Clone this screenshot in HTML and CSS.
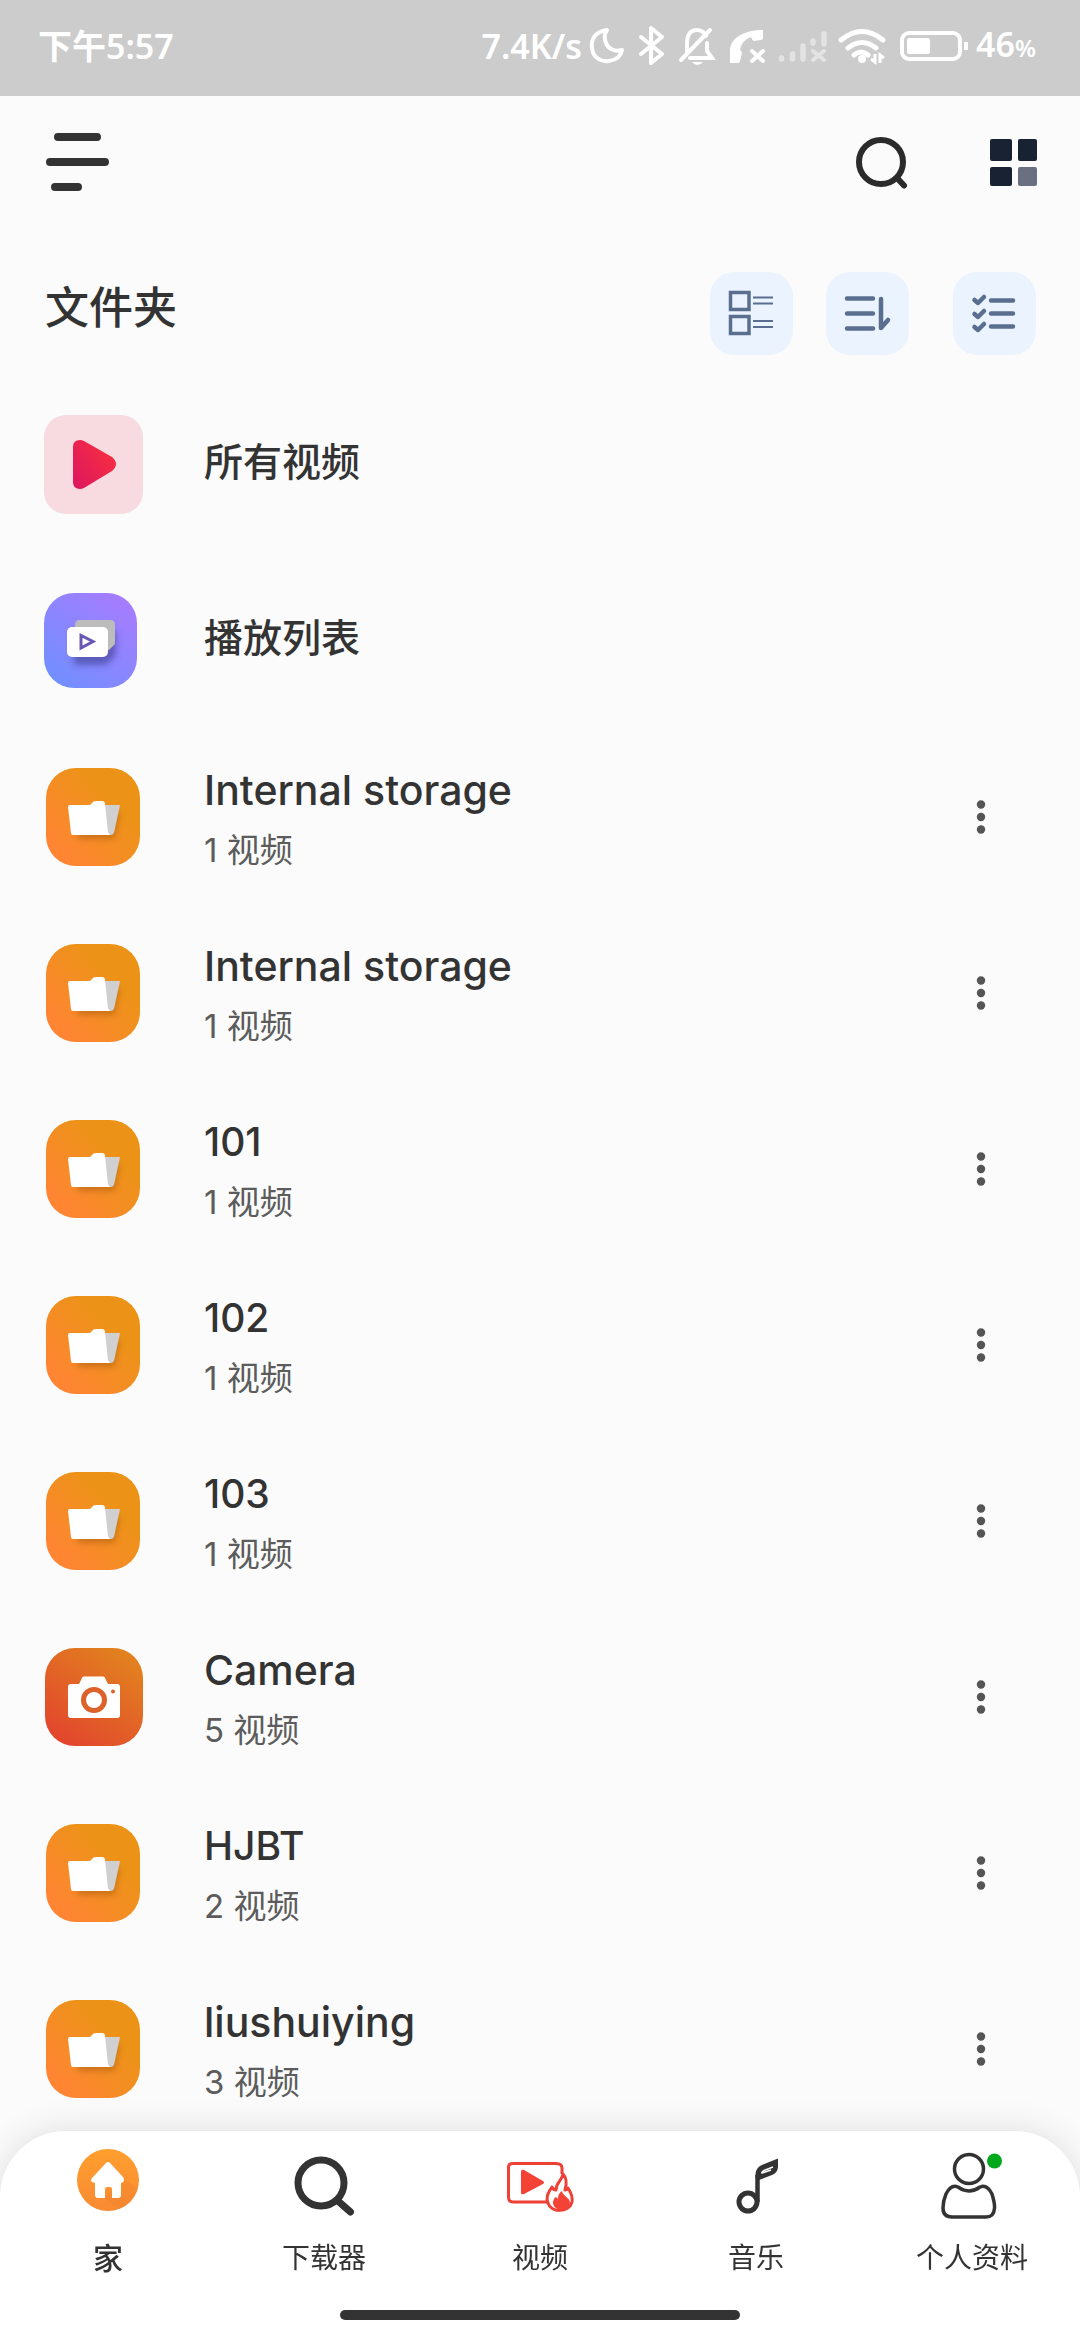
FILE: index.html
```html
<!DOCTYPE html>
<html lang="zh-CN">
<head>
<meta charset="utf-8">
<meta name="viewport" content="width=device-width">
<title>文件夹</title>
<link rel="stylesheet" href="styles.css">
</head>
<body>
<svg class="defs" width="0" height="0" aria-hidden="true">
  <defs>
    <linearGradient id="g-folder" x1="0" y1="1" x2="1" y2="0"><stop offset="0.15" stop-color="#ff8533"/><stop offset="0.7" stop-color="#ec9317"/></linearGradient>
    <linearGradient id="g-camera" x1="0.2" y1="1" x2="0.9" y2="0"><stop offset="0" stop-color="#e2452d"/><stop offset="1" stop-color="#e2861e"/></linearGradient>
    <linearGradient id="g-list" x1="0.1" y1="1" x2="0.9" y2="0"><stop offset="0" stop-color="#6f90ff"/><stop offset="1" stop-color="#a97bff"/></linearGradient>
    <linearGradient id="g-play" x1="0" y1="1" x2="1" y2="0.2"><stop offset="0" stop-color="#dc1560"/><stop offset="1" stop-color="#f8303f"/></linearGradient>
    <linearGradient id="g-home" x1="0" y1="0" x2="0" y2="1"><stop offset="0" stop-color="#ff9f2e"/><stop offset="1" stop-color="#f98a33"/></linearGradient>
    <filter id="soft" x="-30%" y="-30%" width="160%" height="180%"><feGaussianBlur stdDeviation="3"/></filter>
    <symbol id="folder" viewBox="0 0 100 100">
      <rect x="2" y="1" width="94" height="98" rx="30" fill="url(#g-folder)"/>
      <path d="M32 45H76L70 72H34Z" fill="#7a3f00" opacity=".35" filter="url(#soft)"/>
      <path d="M60 38H76L70 66Q69 68 66 68H60Z" fill="#d0d0d0"/>
      <path d="M26 38H45Q47 38 48 36Q49 34 52 34H58Q61 34 61 37L64 65Q65 68 67 68H29Q27 68 27 66L24 40Q24 38 26 38Z" fill="#fff"/>
    </symbol>
    <symbol id="dots" viewBox="0 0 16 40"><circle cx="8" cy="7.500" r="4.200"/><circle cx="8" cy="20" r="4.200"/><circle cx="8" cy="32.500" r="4.200"/></symbol>
  </defs>
</svg>

<div class="status">
  <span class="status-time">下午5:57</span>
  <div class="status-right">
    <span>7.4K/s</span>
    <svg class="status-icons" viewBox="588 24 382 42" width="382" height="42" fill="none" stroke="#fff" aria-hidden="true">
      <path d="M607 29C594 31 591 39 592 47C593 57 601 61 609 60C616 59 621 55 622 49C615 51 608 48 606 42C604 37 604 33 607 29Z" stroke-width="4" stroke-linejoin="round"/>
      <path d="M641 36L662 53L651 62V27L662 36L641 53" stroke-width="4" stroke-linejoin="round" stroke-linecap="round"/>
      <path d="M687 52V43C687 33 691 29 697 29C701 29 704 31 706 35M690 57H712L707 50V42M681 59L710 29" stroke-width="4" stroke-linecap="round"/>
      <path d="M692 61H703Q697 67 692 61Z" fill="#fff" stroke="none"/>
      <path d="M730 62V49C731 36 745 29 763 29V37Q763 39 761 39L754 40Q752 39 751 36C745 38 741 43 740 49Q742 50 742 52L740 60Q740 62 738 62Z" fill="#fff" stroke="none"/>
      <path d="M752 50L763 60M763 50L752 60" stroke-width="4" stroke-linecap="round"/>
      <g opacity=".45" stroke-width="5.500" stroke-linecap="round"><path d="M781.500 57V58M792.500 53V58M803 45V58M813 40V42M824 33V43"/><path d="M813 50L824 59M824 50L813 59" stroke-width="4"/></g>
      <path d="M841 39Q862 22 883 39M848 47Q862 36 876 47M854 54Q861 48 868 54" stroke-width="5" stroke-linecap="round"/>
      <circle cx="862" cy="58" r="4" fill="#fff" stroke="none"/>
      <path d="M875 53V61L871 58M880 62V54L884 57" stroke-width="3"/>
      <rect x="902" y="32" width="58" height="26" rx="7" stroke-width="4"/>
      <rect x="907" y="37" width="23" height="16" rx="2" fill="#fff" stroke="none"/>
      <path d="M966 41V49" stroke-width="4"/>
    </svg>
    <span>46<small>%</small></span>
  </div>
</div>

<header class="topbar">
  <button class="plain" aria-label="菜单">
    <svg width="64" height="60" viewBox="0 0 64 60" stroke="#333" stroke-width="8" stroke-linecap="round"><path d="M12 4H51M4 29H59M9 54H32"/></svg>
  </button>
  <div class="topbar-actions">
    <button class="plain" aria-label="搜索">
      <svg width="54" height="54" viewBox="0 0 54 54" fill="none" stroke="#2b2b2b" stroke-width="6" stroke-linecap="round"><circle cx="26" cy="26" r="22"/><path d="M43 43L49 49.500"/></svg>
    </button>
    <button class="plain" aria-label="网格">
      <svg width="48" height="48" viewBox="0 0 48 48" fill="#182232"><rect x="0" y="0" width="22" height="22" rx="2"/><rect x="28" y="0" width="19" height="22" rx="2"/><rect x="0" y="28" width="22" height="19" rx="2"/><rect x="28" y="28" width="19" height="19" rx="2" fill="#6b7080"/></svg>
    </button>
  </div>
</header>

<div class="section-head">
  <h1>文件夹</h1>
  <div class="tools">
    <button class="tool" aria-label="视图"><svg width="83" height="83" viewBox="0 0 83 83" fill="none" stroke="#5a6f90"><path d="M20.500 20.500H39V37.500H20.500ZM20.500 44.500H39V61.500H20.500Z" stroke-width="3.500"/><path d="M43 25.500H63M43 31.500H63M43 49H63M43 55H63" stroke-width="2"/></svg></button>
    <button class="tool" aria-label="排序"><svg width="83" height="83" viewBox="0 0 83 83" fill="none" stroke="#5a6f90" stroke-width="4.500" stroke-linecap="round" stroke-linejoin="round"><path d="M21 26.500H47M21 41.500H47M21 56.500H47M55 27V56L62 48"/></svg></button>
    <button class="tool tool-last" aria-label="选择"><svg width="83" height="83" viewBox="0 0 83 83" fill="none" stroke="#5a6f90" stroke-width="4.500" stroke-linecap="round" stroke-linejoin="round"><path d="M38 28.500H60M38 41.500H60M38 54.500H60M21.500 28L25 31L31 25M21.500 42L25 45L31 39M21.500 55L25 58L31 52"/></svg></button>
  </div>
</div>

<main>
  <ul class="list">
    <li class="row"><a href="#all"><svg class="thumb" viewBox="0 0 100 100"><rect width="99" height="99" rx="22" fill="#f8dae1"/><path d="M29 32Q29 25 36 25Q38 25 40 26L68 42Q76 49 68 56L40 73Q38 74 36 74Q29 74 29 67Z" fill="url(#g-play)"/></svg><span class="names names-single"><b>所有视频</b></span></a></li>
    <li class="row"><a href="#playlists"><svg class="thumb" viewBox="0 0 100 100"><rect y="2" width="93" height="95" rx="30" fill="url(#g-list)"/><path d="M28 40H72V64L62 74H30Z" fill="#30307a" opacity=".5" filter="url(#soft)"/><path d="M36 29H66Q71 29 71 34V53L65 59H31V34Q31 29 36 29Z" fill="#bcbcbc"/><rect x="23" y="36" width="41" height="30" rx="5" fill="#fff"/><path d="M37 44.500V57L49 50.500Z" fill="none" stroke="#6a58b5" stroke-width="3"/></svg><span class="names names-single"><b>播放列表</b></span></a></li>
    <li class="row"><a href="#f1"><svg class="thumb"><use href="#folder"/></svg><span class="names"><b class="folder-name">Internal storage</b><span>1 视频</span></span></a><button class="more" aria-label="更多"><svg width="16" height="40"><use href="#dots"/></svg></button></li>
    <li class="row"><a href="#f2"><svg class="thumb"><use href="#folder"/></svg><span class="names"><b class="folder-name">Internal storage</b><span>1 视频</span></span></a><button class="more" aria-label="更多"><svg width="16" height="40"><use href="#dots"/></svg></button></li>
    <li class="row"><a href="#f3"><svg class="thumb"><use href="#folder"/></svg><span class="names"><b>101</b><span>1 视频</span></span></a><button class="more" aria-label="更多"><svg width="16" height="40"><use href="#dots"/></svg></button></li>
    <li class="row"><a href="#f4"><svg class="thumb"><use href="#folder"/></svg><span class="names"><b>102</b><span>1 视频</span></span></a><button class="more" aria-label="更多"><svg width="16" height="40"><use href="#dots"/></svg></button></li>
    <li class="row"><a href="#f5"><svg class="thumb"><use href="#folder"/></svg><span class="names"><b>103</b><span>1 视频</span></span></a><button class="more" aria-label="更多"><svg width="16" height="40"><use href="#dots"/></svg></button></li>
    <li class="row"><a href="#f6"><svg class="thumb" viewBox="0 0 100 100"><rect x="1" y="1" width="98" height="98" rx="30" fill="url(#g-camera)"/><path d="M27 37H35L38 31Q38 29.500 40 29.500H59Q61 29.500 61 31L64 37H73Q76 37 76 40V68Q76 71 73 71H27Q24 71 24 68V40Q24 37 27 37Z" fill="#fff"/><circle cx="50" cy="53" r="10.500" fill="none" stroke="#dd6229" stroke-width="5"/><circle cx="69" cy="44.500" r="2" fill="#dd6229"/></svg><span class="names"><b class="folder-name">Camera</b><span>5 视频</span></span></a><button class="more" aria-label="更多"><svg width="16" height="40"><use href="#dots"/></svg></button></li>
    <li class="row"><a href="#f7"><svg class="thumb"><use href="#folder"/></svg><span class="names"><b>HJBT</b><span>2 视频</span></span></a><button class="more" aria-label="更多"><svg width="16" height="40"><use href="#dots"/></svg></button></li>
    <li class="row"><a href="#f8"><svg class="thumb"><use href="#folder"/></svg><span class="names"><b class="folder-name">liushuiying</b><span>3 视频</span></span></a><button class="more" aria-label="更多"><svg width="16" height="40"><use href="#dots"/></svg></button></li>
  </ul>
</main>

<footer class="dock">
  <nav class="tabs">
    <a class="tab tab-active" href="#home"><svg width="72" height="72" viewBox="0 0 72 72"><circle cx="36" cy="32" r="31" fill="url(#g-home)"/><path d="M52 31L66 41Q61 57 46 61L32 50Z" fill="#ee822c" opacity=".35"/><path d="M36 14Q37 14 38 15L51 29Q54 34 49 35V47Q49 50 46 50H40V41Q40 39 38 39H35Q33 39 33 41V50H26Q23 50 23 47V35Q17 34 20 30L34 15Q35 14 36 14Z" fill="#fff"/></svg><span>家</span></a>
    <a class="tab" href="#downloader"><svg width="72" height="72" viewBox="0 0 72 72" fill="none" stroke="#333" stroke-width="7" stroke-linecap="round"><circle cx="33" cy="35" r="23"/><path d="M50 53L62.500 64"/></svg><span>下载器</span></a>
    <a class="tab" href="#video"><svg width="72" height="72" viewBox="0 0 72 72" fill="none" stroke="#ee4136" stroke-width="3"><path d="M43 54H9Q4.500 54 4.500 49V19Q4.500 15.500 9 15.500H52Q58 15.500 58 20V26"/><path d="M17 24Q17 21 20 22L39 33Q41 34.500 39 36L20 46Q17 47 17 45Z" fill="#f44336" stroke="none"/><path d="M59 26C58 33 52 34 52 42C49 42 48 39 48 39C43 46 42 50 44 55C47 65 65 65 68 54C69 47 66 43 64 40C63 42 62 42 61 42C63 35 62 29 59 26Z" fill="#fff" stroke-linejoin="round"/><path d="M58 43C59 49 66 49 66 55C64 64 50 64 49 55C49 52 51 49 52 49L54 51C54 47 55 45 58 43Z" fill="#f44336" stroke="none"/></svg><span>视频</span></a>
    <a class="tab" href="#music"><svg width="72" height="72" viewBox="0 0 72 72" fill="none" stroke="#333"><circle cx="28" cy="54" r="9" stroke-width="5"/><path d="M37.500 54V27" stroke-width="4.500"/><path d="M35.500 30V26Q36 19 43 16.500L58 10.500V19Q57.500 25 52 27L39 32Z" fill="#333" stroke="none"/><path d="M41.500 25.500Q42 23.500 44 22.500L53 19" stroke="#fff" stroke-width="1.500"/><path d="M42 25L51 22" stroke="#fff" stroke-width="1.500"/></svg><span>音乐</span></a>
    <a class="tab" href="#profile"><svg width="72" height="72" viewBox="0 0 72 72" fill="none" stroke="#333" stroke-width="3.500"><ellipse cx="33" cy="21" rx="14.500" ry="14.500"/><path d="M22 39Q33 47 44 39Q51 36 56 46Q59 56 58.500 60Q58 69 50 69H16Q7 69 7 60Q7 53 10 46Q15 36 22 39Z" stroke-linejoin="round"/><circle cx="58.500" cy="13" r="7.500" fill="#00a81c" stroke="none"/></svg><span>个人资料</span></a>
  </nav>
  <div class="home-bar"></div>
</footer>
</body>
</html>
```
FILE: styles.css
```css
* { box-sizing: border-box; }

body {
  margin: 0;
  height: 100vh;
  display: flex;
  flex-direction: column;
  overflow: hidden;
  background: #fbfbfb;
  color: #333;
  font-family: Inter, "Noto Sans CJK SC", sans-serif;
}

svg { display: block; flex: none; }
.defs { position: absolute; }
a { color: inherit; text-decoration: none; }
button { border: 0; padding: 0; background: none; cursor: pointer; }

.status {
  flex: none;
  display: flex;
  justify-content: space-between;
  align-items: center;
  height: 96px;
  padding: 0 44px 4px 38px;
  background: #ccc;
  color: #fff;
  font: 600 34px/40px "Noto Sans", "Noto Sans CJK SC", sans-serif;
}
.status-right { display: flex; align-items: center; gap: 6px; }
.status small { font-size: 24px; }

.topbar {
  flex: none;
  display: flex;
  justify-content: space-between;
  align-items: center;
  height: 134px;
  padding: 0 42px 0 46px;
}
.topbar-actions { display: flex; align-items: center; gap: 81px; }

.section-head {
  flex: none;
  display: flex;
  justify-content: space-between;
  align-items: center;
  height: 147px;
  padding: 20px 44px 0 45px;
}
.section-head h1 { margin: 0 0 12px; font-size: 44px; line-height: 60px; font-weight: 500; }
.tools { display: flex; gap: 33px; }
.tool { border-radius: 24px; background: #ebf3fe; }
.tool-last { margin-left: 11px; }

main { flex: 1; min-height: 0; overflow: hidden; }
.list { margin: 0; padding: 0; list-style: none; }
.row {
  display: flex;
  align-items: center;
  height: 176px;
  padding: 0 67px 0 44px;
}
.row a { flex: 1; display: flex; align-items: center; gap: 60px; }
.thumb { width: 100px; height: 100px; }
.names { display: flex; flex-direction: column; gap: 8px; }
.names-single { padding-bottom: 6px; }
.names b { font-size: 39px; line-height: 58px; font-weight: 500; }
.names .folder-name { font-size: 41px; }
.names span { font-size: 33px; line-height: 46px; color: #5c5c5c; }
.more { display: flex; justify-content: center; width: 64px; fill: #555; }

.dock {
  position: fixed;
  left: 0;
  right: 0;
  bottom: 0;
  display: flex;
  flex-direction: column;
  align-items: center;
  padding: 17px 0 20px;
  border-radius: 66px 66px 0 0;
  background: #fff;
  box-shadow: 0 0 36px rgba(0, 0, 0, 0.12);
}
.tabs { display: flex; width: 100%; margin-bottom: 32px; }
.tab {
  flex: 1;
  display: flex;
  flex-direction: column;
  align-items: center;
  gap: 18px;
  font-size: 28px;
  line-height: 40px;
}
.tab-active { font-size: 30px; font-weight: 500; }
.home-bar { width: 37%; height: 10px; border-radius: 5px; background: #333; }
```
